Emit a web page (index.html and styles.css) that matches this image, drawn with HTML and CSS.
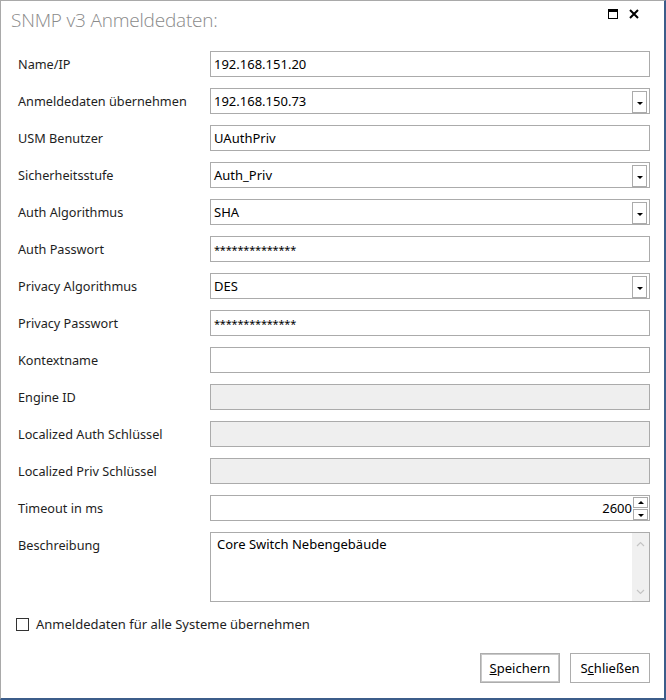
FILE: index.html
```html
<!DOCTYPE html>
<html lang="de">
<head>
  <meta charset="UTF-8" />
  <title>SNMP v3 Anmeldedaten</title>
  <link rel="stylesheet" href="styles.css">
</head>
<body>

<div class="window">
  <div class="titlebar">
    <h1>SNMP v3 Anmeldedaten:</h1>
    <div class="controls">
      <svg class="ctl" width="11" height="11" viewBox="0 0 11 11"><rect x="0.5" y="0.5" width="9" height="9" fill="none" stroke="#000"/><rect x="0" y="0" width="10" height="3" fill="#000"/></svg>
      <svg class="ctl" width="11" height="11" viewBox="0 0 11 11"><path d="M1 1 L9 9 M9 1 L1 9" stroke="#000" stroke-width="2"/></svg>
    </div>
  </div>

  <div class="form">
    <label>Name/IP</label>
    <div class="field">192.168.151.20</div>

    <label>Anmeldedaten übernehmen</label>
    <div class="field combo">192.168.150.73<span class="drop"></span></div>

    <label>USM Benutzer</label>
    <div class="field">UAuthPriv</div>

    <label>Sicherheitsstufe</label>
    <div class="field combo">Auth_Priv<span class="drop"></span></div>

    <label>Auth Algorithmus</label>
    <div class="field combo">SHA<span class="drop"></span></div>

    <label>Auth Passwort</label>
    <div class="field pw">**************</div>

    <label>Privacy Algorithmus</label>
    <div class="field combo">DES<span class="drop"></span></div>

    <label>Privacy Passwort</label>
    <div class="field pw">**************</div>

    <label>Kontextname</label>
    <div class="field"></div>

    <label>Engine ID</label>
    <div class="field disabled"></div>

    <label>Localized Auth Schlüssel</label>
    <div class="field disabled"></div>

    <label>Localized Priv Schlüssel</label>
    <div class="field disabled"></div>

    <label>Timeout in ms</label>
    <div class="field spin">
      <span class="num">2600</span>
      <span class="spinbtns"><span class="up"></span><span class="down"></span></span>
    </div>

    <label class="top">Beschreibung</label>
    <div class="field area">
      <span class="areatext">Core Switch Nebengebäude</span>
      <span class="scroll">
        <svg width="9" height="6" viewBox="0 0 9 6"><path d="M1 5 L4.5 1.5 L8 5" fill="none" stroke="#c4c4c4" stroke-width="1.2"/></svg>
        <svg width="9" height="6" viewBox="0 0 9 6"><path d="M1 1 L4.5 4.5 L8 1" fill="none" stroke="#c4c4c4" stroke-width="1.2"/></svg>
      </span>
    </div>
  </div>

  <div class="check">
    <span class="box"></span>
    <span>Anmeldedaten für alle Systeme übernehmen</span>
  </div>

  <div class="buttons">
    <button class="btn default"><u>S</u>peichern</button>
    <button class="btn">S<u>c</u>hließen</button>
  </div>
</div>

</body>
</html>
```

FILE: styles.css
```css
body {
  margin: 0;
  background: #fff;
  font-family: "Noto Sans", "Open Sans", sans-serif;
  font-size: 12.7px;
  color: #1e1e1e;
}

.window {
  width: 666px;
  height: 700px;
  box-sizing: border-box;
  border-top: 1px solid #a9a9a9;
  border-left: 1px solid #a9a9a9;
  border-right: 2px solid #3c5d8a;
  border-bottom: 2px solid #3c5d8a;
  position: relative;
}

.titlebar {
  display: flex;
  justify-content: space-between;
  height: 40px;
}

.titlebar h1 {
  margin: 0;
  padding: 6px 0 0 10px;
  font-family: "Open Sans", sans-serif;
  font-weight: 300;
  font-size: 19px;
  color: #8a8a8a;
  letter-spacing: -0.2px;
}

.controls {
  display: flex;
  gap: 10px;
  padding: 8px 24px 0 0;
}

.ctl {
  display: block;
}

.form {
  display: grid;
  grid-template-columns: 192px 440px;
  grid-auto-rows: 26px;
  row-gap: 11px;
  padding: 10px 0 0 17px;
}

.form label {
  display: flex;
  align-items: center;
}

.form label.top {
  align-items: flex-start;
  padding-top: 4px;
}

.field {
  box-sizing: border-box;
  border: 1px solid #ababab;
  height: 26px;
  display: flex;
  align-items: center;
  padding: 0 3px;
  color: #000;
  font-size: 13px;
  position: relative;
}

.field.pw {
  font-size: 11px;
  letter-spacing: -0.2px;
}

.field.disabled {
  background: #efefef;
}

.drop {
  position: absolute;
  right: 2px;
  top: 2px;
  width: 15px;
  height: 22px;
  box-sizing: border-box;
  border: 1px solid #ababab;
  background: #fff;
}

.drop::after {
  content: "";
  position: absolute;
  left: 4px;
  top: 10px;
  border-left: 3px solid transparent;
  border-right: 3px solid transparent;
  border-top: 3px solid #000;
}

.field.spin {
  justify-content: flex-end;
  padding-right: 0;
}

.num {
  margin-right: 1px;
}

.spinbtns {
  display: flex;
  flex-direction: column;
  gap: 1px;
  width: 15px;
  height: 23px;
  margin-right: 1px;
}

.spinbtns span {
  flex: 1;
  border: 1px solid #ababab;
  position: relative;
}

.spinbtns .up::after,
.spinbtns .down::after {
  content: "";
  position: absolute;
  left: 4px;
  border-left: 3px solid transparent;
  border-right: 3px solid transparent;
}

.spinbtns .up::after {
  top: 3px;
  border-bottom: 3px solid #000;
}

.spinbtns .down::after {
  top: 4px;
  border-top: 3px solid #000;
}

.field.area {
  grid-row: span 2;
  height: 70px;
  align-items: flex-start;
  padding: 0;
  align-self: start;
}

.areatext {
  flex: 1;
  padding: 2px 0 0 6px;
}

.scroll {
  width: 17px;
  height: 68px;
  background: #f0f0f0;
  display: flex;
  flex-direction: column;
  justify-content: space-between;
  align-items: center;
  padding: 8px 0 6px;
  box-sizing: border-box;
}

.scroll svg {
  display: block;
}

.check {
  display: flex;
  align-items: center;
  gap: 7px;
  margin: 20px 0 0 15px;
  font-size: 13px;
}

.box {
  width: 11px;
  height: 11px;
  border: 1px solid #333;
}

.buttons {
  position: absolute;
  right: 14px;
  bottom: 15px;
  display: flex;
  gap: 10px;
}

.btn {
  font-family: inherit;
  font-size: 13px;
  width: 80px;
  height: 30px;
  background: #fff;
  border: 1px solid #adadad;
  color: #000;
  padding: 0;
}

.btn.default {
  border: 2px solid #c9c9c9;
  outline: 1px solid #adadad;
  outline-offset: -1px;
}
```
